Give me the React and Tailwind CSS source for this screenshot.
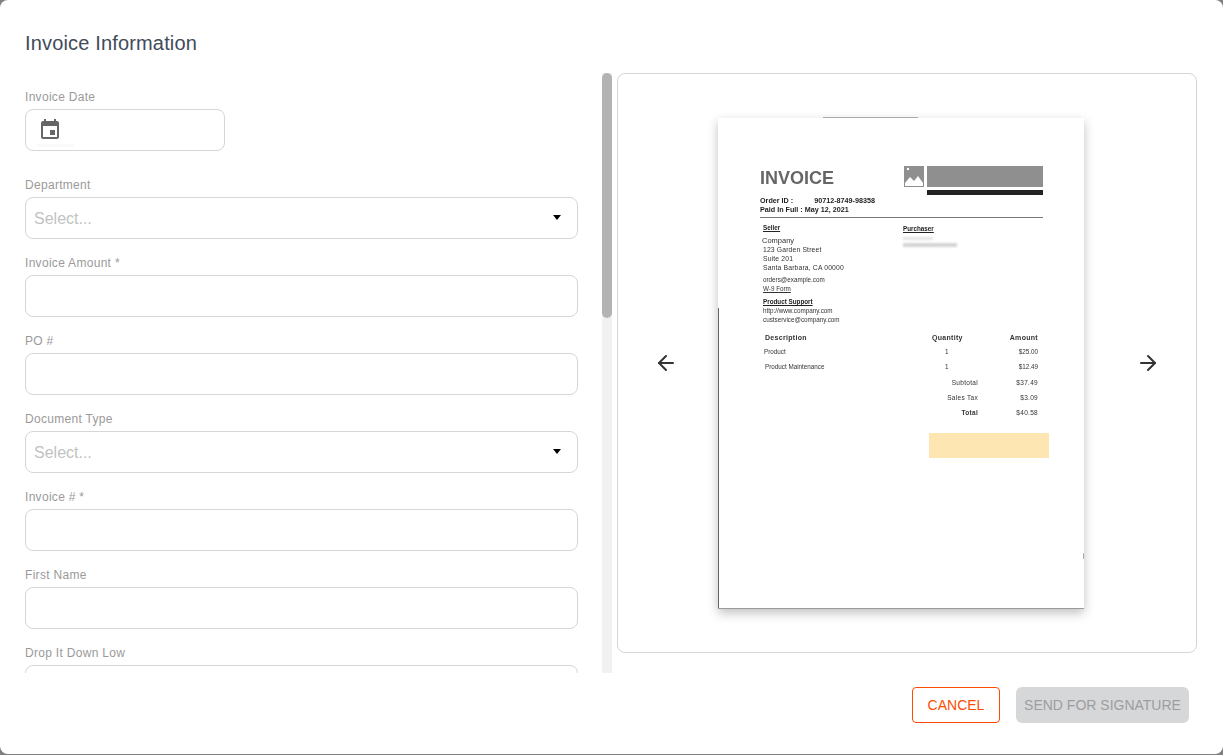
import { MdEvent } from 'react-icons/md';
import { ArrowLeft, ArrowRight } from 'lucide-react';

const fields = [
  { label: 'Department', select: true },
  { label: 'Invoice Amount *' },
  { label: 'PO #' },
  { label: 'Document Type', select: true },
  { label: 'Invoice # *' },
  { label: 'First Name' },
  { label: 'Drop It Down Low' },
];

function Field({ label, select }) {
  return (
    <div className="mb-4">
      <div className="mb-1 h-4 text-xs leading-4 tracking-[0.3px] text-[#9a9a9a]">{label}</div>
      <div className="flex h-[42px] items-center justify-between rounded-lg border border-[#d6d6d6] bg-white pl-2 pr-4">
        {select ? <span className="pt-0.5 text-base text-[#c2c2c2]">Select...</span> : null}
        {select ? <span className="-mt-[2px] h-0 w-0 border-x-4 border-t-[5px] border-x-transparent border-t-black" /> : null}
      </div>
    </div>
  );
}

function InvoiceScan() {
  return (
    <div className="relative flex h-[491px] w-[366px] flex-col border-b border-b-[#9a9a9a] bg-white pl-[42px] pr-[41px] pt-[48px] text-[6.3px] leading-[9px] text-[#333] shadow-[0_4px_10px_rgba(0,0,0,0.25)] blur-[0.4px]">
      <div className="absolute bottom-0 left-0 top-[190px] w-px bg-[#666]" />
      <div className="absolute -top-px left-[105px] h-px w-[95px] bg-[#aaa]" />
      <div className="absolute right-0 top-[435px] h-[6px] w-px rounded-full bg-[#aaa]" />
      <div className="flex justify-between">
        <div className="pt-[2px]">
          <div className="text-[18px] font-bold leading-[20px] text-[#666]">INVOICE</div>
          <div className="mt-[8px] text-[7.2px] font-bold leading-[9px] text-[#222]">
            Order ID : <span className="ml-[19px]">90712-8749-98358</span>
          </div>
          <div className="text-[7.2px] font-bold leading-[9px] text-[#222]">Paid In Full : May 12, 2021</div>
        </div>
        <div className="flex gap-[3px]">
          <svg width="20" height="21" viewBox="0 0 20 21">
            <rect width="20" height="21" fill="#8f8f8f" />
            <circle cx="4" cy="3" r="1.2" fill="#fff" />
            <path d="M1 20V17L6 11L10 15L14 10L19 17V20Z" fill="#fff" />
          </svg>
          <div className="w-[116px]">
            <div className="h-[21px] bg-[#8f8f8f]" />
            <div className="mt-[3px] h-[5px] bg-[#222]" />
          </div>
        </div>
      </div>
      <div className="mt-[3px] h-px bg-[#777]" />
      <div className="mt-[5px] flex">
        <div className="w-[143px] pl-[3px]">
          <div className="font-bold text-[#222] underline">Seller</div>
          <div className="-ml-px mt-[4px] text-[7.5px] leading-[9px]">Company</div>
          <div className="text-[6.8px] tracking-[0.15px]">123 Garden Street</div>
          <div className="text-[6.8px] tracking-[0.15px]">Suite 201</div>
          <div className="text-[6.8px] tracking-[0.15px]">Santa Barbara, CA 00000</div>
          <div className="mt-[3px]">orders@example.com</div>
          <div className="underline">W-9 Form</div>
          <div className="mt-[4px] font-bold text-[#222] underline">Product Support</div>
          <div>http://www.company.com</div>
          <div>custservice@company.com</div>
        </div>
        <div className="pt-px">
          <div className="font-bold text-[#222] underline">Purchaser</div>
          <div className="mt-[4px] h-[3px] w-[30px] bg-[#e4e4e4] blur-[1px]" />
          <div className="mt-[3px] h-[4px] w-[54px] bg-[#d4d4d4] blur-[1px]" />
        </div>
      </div>
      <div className="mt-[9px] flex pl-[5px] text-[7px] font-bold tracking-[0.3px]">
        <div className="w-[167px]">Description</div>
        <div className="w-[62px]">Quantity</div>
        <div className="w-[44px] text-right">Amount</div>
      </div>
      <div className="mt-[5px] flex pl-[4px]">
        <div className="w-[168px]">Product</div>
        <div className="w-[62px] pl-[13px]">1</div>
        <div className="w-[44px] text-right">$25.00</div>
      </div>
      <div className="mt-[6px] flex pl-[5px]">
        <div className="w-[167px]">Product Maintenance</div>
        <div className="w-[62px] pl-[13px]">1</div>
        <div className="w-[44px] text-right">$12.49</div>
      </div>
      <div className="mt-[7px] flex justify-end pr-[5px] text-[6.5px] tracking-[0.3px]">
        <div className="mr-[30px]">Subtotal</div>
        <div className="w-[30px] text-right">$37.49</div>
      </div>
      <div className="mt-[6px] flex justify-end pr-[5px] text-[6.5px] tracking-[0.3px]">
        <div className="mr-[30px]">Sales Tax</div>
        <div className="w-[30px] text-right">$3.09</div>
      </div>
      <div className="mt-[6px] flex justify-end pr-[5px] text-[6.5px] tracking-[0.3px]">
        <div className="mr-[30px] font-bold">Total</div>
        <div className="w-[30px] text-right">$40.58</div>
      </div>
      <div className="-mr-[6px] ml-auto mt-[16px] h-[25px] w-[120px] bg-[#fee6b3]" />
    </div>
  );
}

export default function App() {
  return (
    <div className="h-[755px] bg-[#808080] font-['Liberation_Sans',Arial,sans-serif]">
      <div className="flex h-[754px] flex-col rounded-lg bg-white">
        <h2 className="h-[73px] pl-[25px] pt-[29px] text-[20px] font-normal leading-7 tracking-[0.16px] text-[#414b5a]">Invoice Information</h2>
        <div className="flex h-[600px] pl-[25px]">
          <div className="h-full w-[553px] overflow-hidden">
            <div className="mb-[26px] pt-4">
              <div className="mb-1 h-4 text-xs leading-4 tracking-[0.3px] text-[#9a9a9a]">Invoice Date</div>
              <div className="relative flex h-[42px] w-[200px] items-center rounded-lg border border-[#d6d6d6] pl-[12px]">
                <MdEvent className="text-[24px] text-[#666]" />
                <div className="absolute left-[11px] top-[34px] h-[3px] w-[37px] bg-[#fafafa]" />
              </div>
            </div>
            {fields.map((f) => (
              <Field key={f.label} {...f} />
            ))}
          </div>
          <div className="ml-6 h-full w-[10px] bg-[#f1f1f1]">
            <div className="h-[245px] rounded-[5px] bg-[#b3b3b3]" />
          </div>
          <div className="ml-[5px] flex h-[580px] w-[580px] items-center rounded-lg border border-[#d6d6d6] px-[36px]">
            <ArrowLeft size={24} strokeWidth={2} className="text-[#333]" />
            <div className="ml-10 flex h-full items-start pt-[44px]">
              <InvoiceScan />
            </div>
            <ArrowRight size={24} strokeWidth={2} className="ml-auto text-[#333]" />
          </div>
        </div>
        <div className="flex justify-end gap-4 pr-[34px] pt-[14px]">
          <button className="h-9 w-[88px] rounded border border-[#fc4c02] text-sm text-[#fc4c02]">CANCEL</button>
          <button className="h-9 w-[173px] rounded-md bg-[#d6d7d9] text-sm text-[#9d9d9f]">SEND FOR SIGNATURE</button>
        </div>
      </div>
    </div>
  );
}
